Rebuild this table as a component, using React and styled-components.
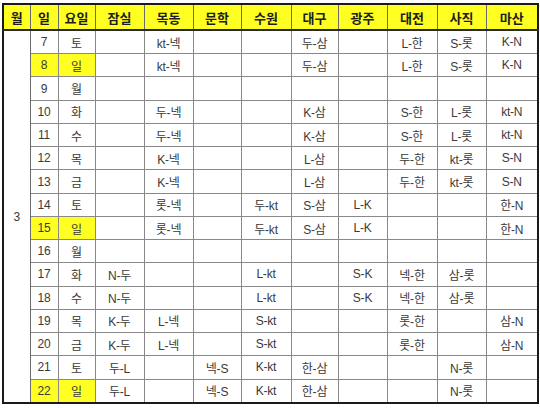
import React from "react";
import styled, { createGlobalStyle } from "styled-components";

const GlobalStyle = createGlobalStyle`
  html, body {
    margin: 0;
    padding: 0;
    background: #ffffff;
  }
  body {
    font-family: "Liberation Sans", "Noto Sans CJK KR", sans-serif;
  }
`;

const Page = styled.div`
  width: 540px;
  height: 408px;
  padding: 3px 0 0 2px;
  box-sizing: border-box;
`;

const Table = styled.table`
  width: 535px;
  height: 401px;
  border-collapse: collapse;
  table-layout: fixed;
  border: 2px solid #1a1a1a;
  font-size: 12px;
  color: #3a3a3a;
`;

const Head = styled.th`
  height: 24px;
  padding: 0;
  background: #ffff22;
  color: #1e1e1e;
  font-weight: bold;
  font-size: 13px;
  text-align: center;
  border: 1px solid #6a6a6a;
  border-bottom: 2px solid #2a2a2a;
`;

const Cell = styled.td`
  height: 22px;
  padding: 0;
  text-align: center;
  vertical-align: middle;
  border: 1px solid #888888;
  background: ${(p) => (p.$hl ? "#ffff22" : "#ffffff")};
  letter-spacing: -0.2px;
`;

const MonthCell = styled(Cell)`
  border-right: 1px solid #6a6a6a;
`;

const columns = [
  { name: "월", w: 27 },
  { name: "일", w: 28 },
  { name: "요일", w: 37 },
  { name: "잠실", w: 49 },
  { name: "목동", w: 49 },
  { name: "문학", w: 48 },
  { name: "수원", w: 50 },
  { name: "대구", w: 47 },
  { name: "광주", w: 49 },
  { name: "대전", w: 50 },
  { name: "사직", w: 49 },
  { name: "마산", w: 52 },
];

// [일, 요일, 잠실, 목동, 문학, 수원, 대구, 광주, 대전, 사직, 마산]
const games = [
  [7, "토", "", "kt-넥", "", "", "두-삼", "", "L-한", "S-롯", "K-N"],
  [8, "일", "", "kt-넥", "", "", "두-삼", "", "L-한", "S-롯", "K-N"],
  [9, "월", "", "", "", "", "", "", "", "", ""],
  [10, "화", "", "두-넥", "", "", "K-삼", "", "S-한", "L-롯", "kt-N"],
  [11, "수", "", "두-넥", "", "", "K-삼", "", "S-한", "L-롯", "kt-N"],
  [12, "목", "", "K-넥", "", "", "L-삼", "", "두-한", "kt-롯", "S-N"],
  [13, "금", "", "K-넥", "", "", "L-삼", "", "두-한", "kt-롯", "S-N"],
  [14, "토", "", "롯-넥", "", "두-kt", "S-삼", "L-K", "", "", "한-N"],
  [15, "일", "", "롯-넥", "", "두-kt", "S-삼", "L-K", "", "", "한-N"],
  [16, "월", "", "", "", "", "", "", "", "", ""],
  [17, "화", "N-두", "", "", "L-kt", "", "S-K", "넥-한", "삼-롯", ""],
  [18, "수", "N-두", "", "", "L-kt", "", "S-K", "넥-한", "삼-롯", ""],
  [19, "목", "K-두", "L-넥", "", "S-kt", "", "", "롯-한", "", "삼-N"],
  [20, "금", "K-두", "L-넥", "", "S-kt", "", "", "롯-한", "", "삼-N"],
  [21, "토", "두-L", "", "넥-S", "K-kt", "한-삼", "", "", "N-롯", ""],
  [22, "일", "두-L", "", "넥-S", "K-kt", "한-삼", "", "", "N-롯", ""],
];

export default function App() {
  return (
    <Page>
      <GlobalStyle />
      <Table>
        <colgroup>
          {columns.map((c) => (
            <col key={c.name} style={{ width: c.w }} />
          ))}
        </colgroup>
        <thead>
          <tr>
            {columns.map((c) => (
              <Head key={c.name}>{c.name}</Head>
            ))}
          </tr>
        </thead>
        <tbody>
          {games.map((row, i) => {
            const sunday = row[1] === "일";
            return (
              <tr key={row[0]}>
                {i === 0 && <MonthCell rowSpan={games.length}>3</MonthCell>}
                {row.map((v, j) => (
                  <Cell key={j} $hl={sunday && j < 2}>
                    {v}
                  </Cell>
                ))}
              </tr>
            );
          })}
        </tbody>
      </Table>
    </Page>
  );
}
